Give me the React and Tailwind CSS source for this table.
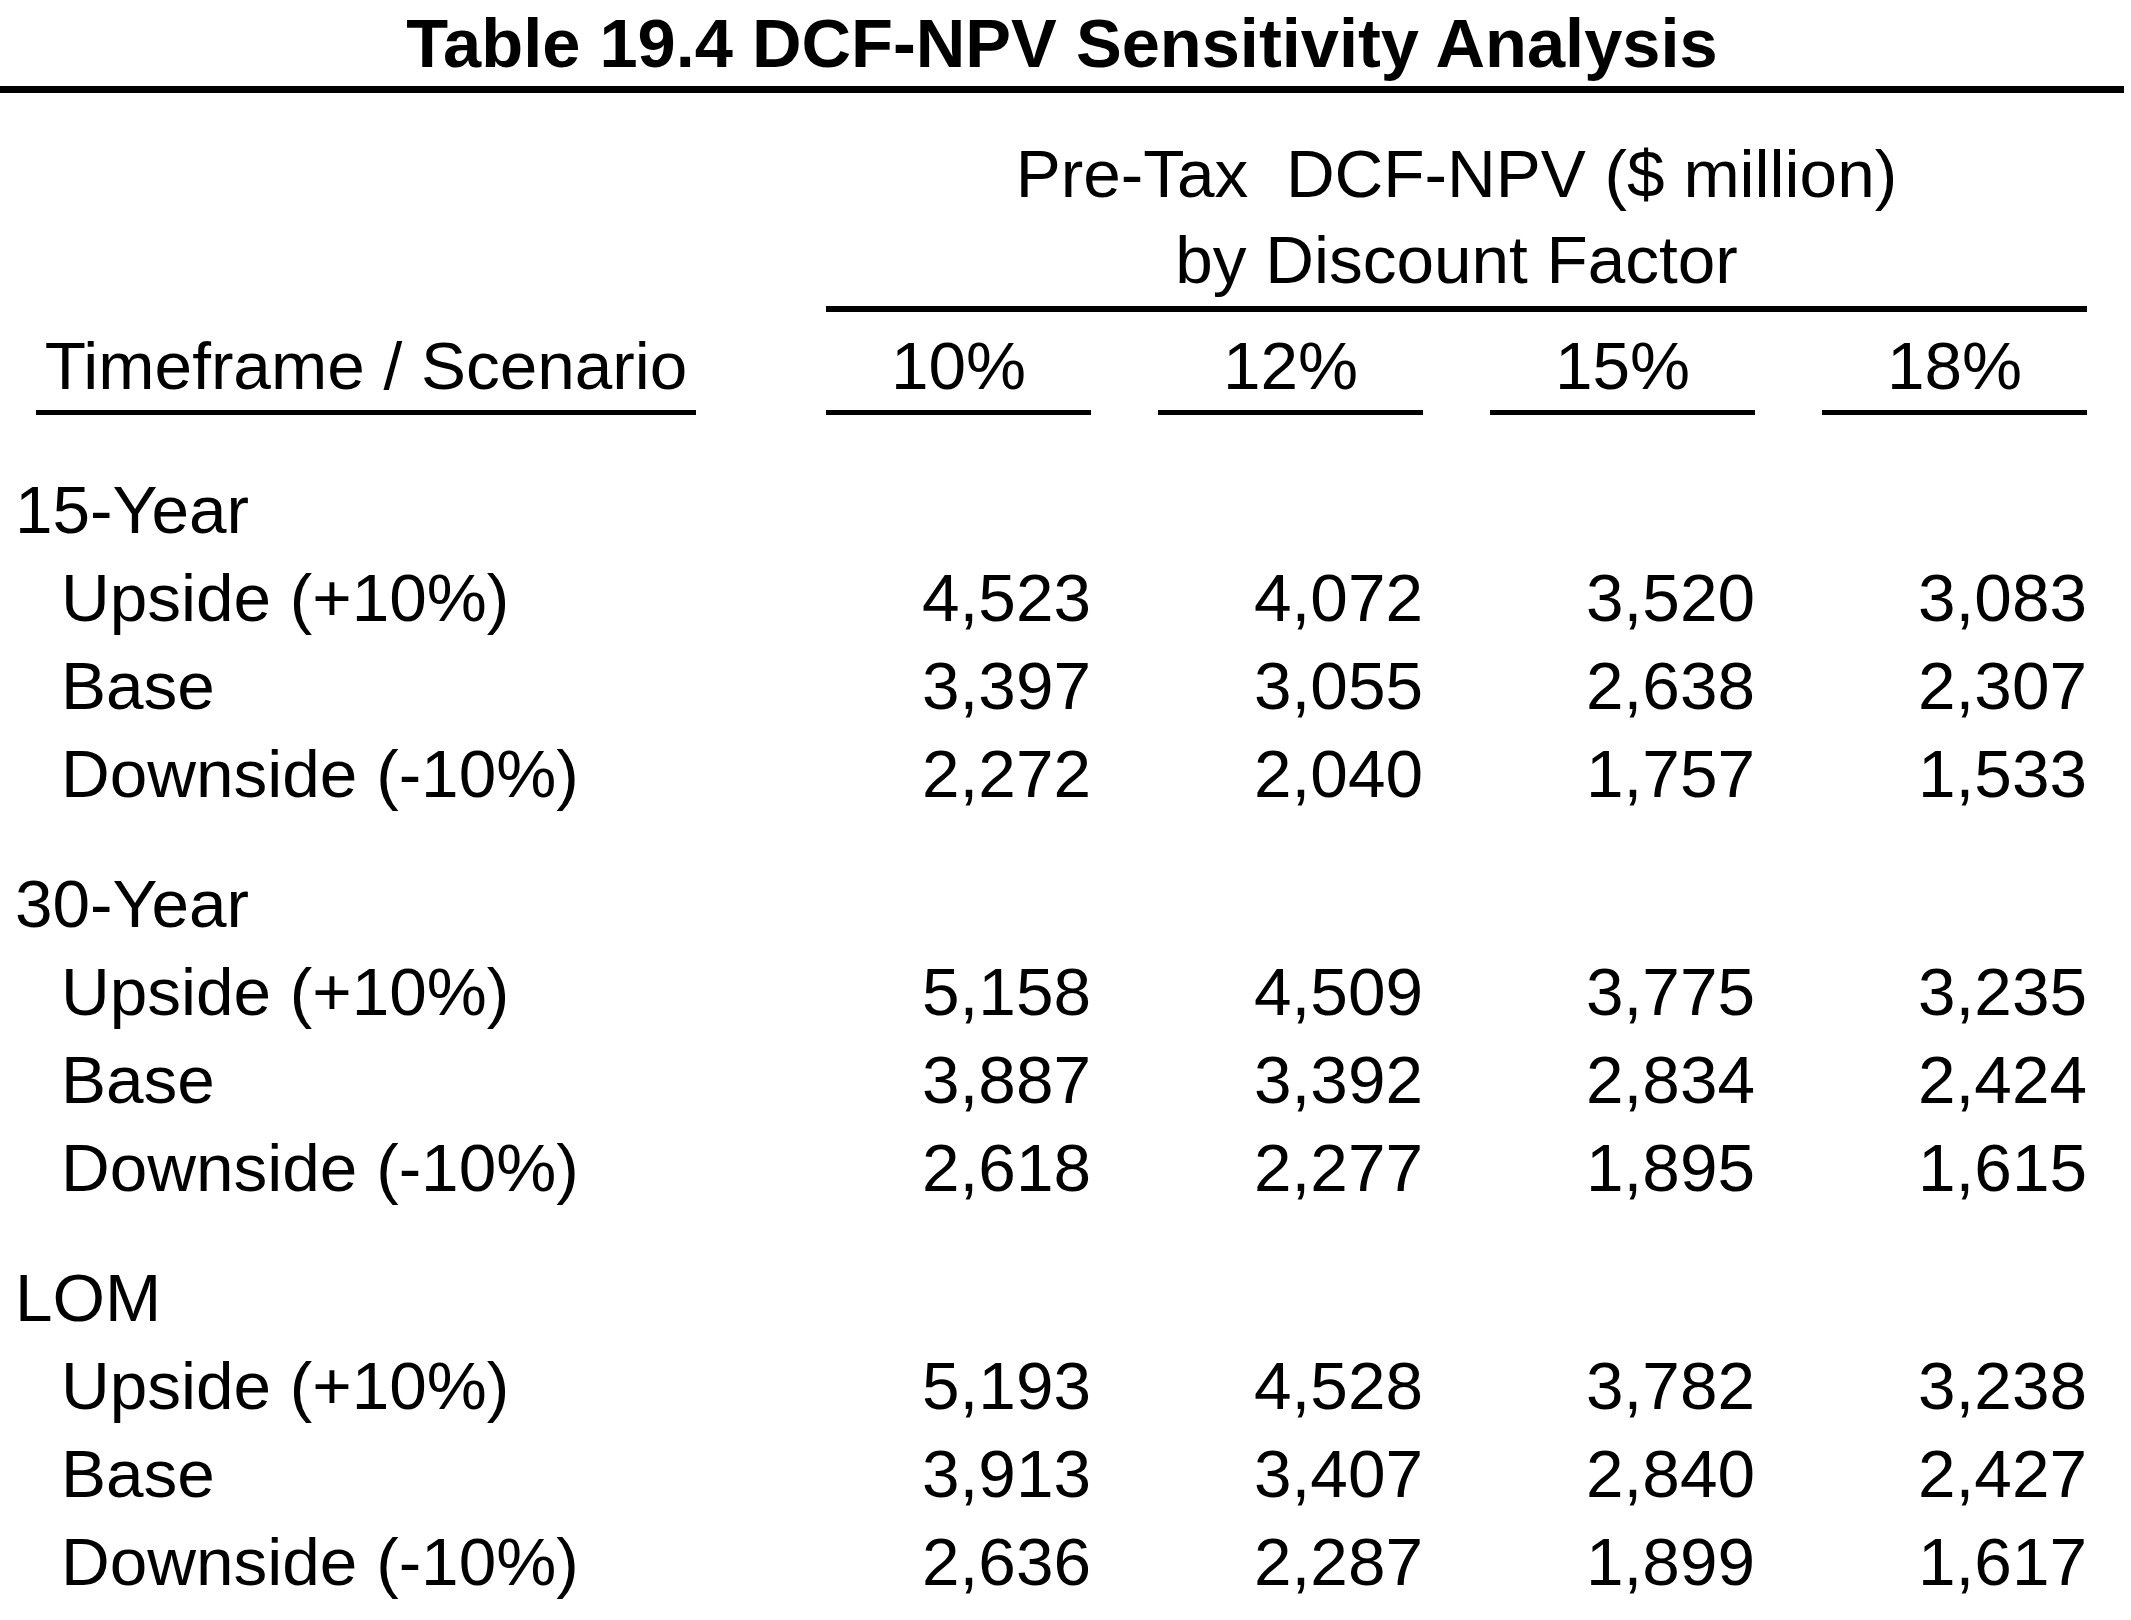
import React from "react";

const groups = [
  {
    name: "15-Year",
    rows: [
      ["Upside (+10%)", ["4,523", "4,072", "3,520", "3,083"]],
      ["Base", ["3,397", "3,055", "2,638", "2,307"]],
      ["Downside (-10%)", ["2,272", "2,040", "1,757", "1,533"]],
    ],
  },
  {
    name: "30-Year",
    rows: [
      ["Upside (+10%)", ["5,158", "4,509", "3,775", "3,235"]],
      ["Base", ["3,887", "3,392", "2,834", "2,424"]],
      ["Downside (-10%)", ["2,618", "2,277", "1,895", "1,615"]],
    ],
  },
  {
    name: "LOM",
    rows: [
      ["Upside (+10%)", ["5,193", "4,528", "3,782", "3,238"]],
      ["Base", ["3,913", "3,407", "2,840", "2,427"]],
      ["Downside (-10%)", ["2,636", "2,287", "1,899", "1,617"]],
    ],
  },
];

const rates = ["10%", "12%", "15%", "18%"];

export default function App() {
  return (
    <div className="w-[2131px] min-h-[1620px] bg-white text-black font-['Liberation_Sans',Arial,sans-serif]">
      <div className="w-[2124px]">
        <div className="pt-[4px] text-center text-[68.6px] leading-[80px] font-bold">
          Table 19.4 DCF-NPV Sensitivity Analysis
        </div>
        <div className="mt-[2px] h-[7px] bg-black" />

        <div className="mt-[38px] grid grid-cols-[759px_265px_265px_265px_265px] gap-x-[67px] text-[67.5px]">
          <div className="col-start-2 col-span-4">
            <div className="text-center leading-[86px] whitespace-pre">Pre-Tax  DCF-NPV ($ million)</div>
            <div className="text-center leading-[86px]">by Discount Factor</div>
            <div className="mt-[3px] h-[6px] bg-black" />
          </div>
        </div>

        <div className="mt-[10px] grid grid-cols-[759px_265px_265px_265px_265px] gap-x-[67px] text-[67.5px] leading-[88px]">
          <div>
            <div className="ml-[36px] w-[660px] text-center border-b-[5px] border-black">Timeframe / Scenario</div>
          </div>
          {rates.map((r) => (
            <div key={r} className="text-center border-b-[5px] border-black">
              {r}
            </div>
          ))}
        </div>

        <div className="mt-[51px] flex flex-col gap-[42px] text-[67.5px] leading-[88px]">
          {groups.map((g) => (
            <div key={g.name}>
              <div className="pl-[15px] h-[88px]">{g.name}</div>
              {g.rows.map(([label, vals]) => (
                <div
                  key={label}
                  className="grid grid-cols-[759px_265px_265px_265px_265px] gap-x-[67px] h-[88px]"
                >
                  <div className="pl-[61px] whitespace-nowrap">{label}</div>
                  {vals.map((v, i) => (
                    <div key={i} className="text-right">
                      {v}
                    </div>
                  ))}
                </div>
              ))}
            </div>
          ))}
        </div>
      </div>
    </div>
  );
}
